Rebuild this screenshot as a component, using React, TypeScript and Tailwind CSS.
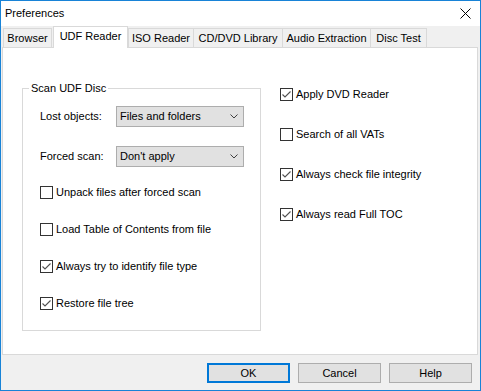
const FONT = "font-['Liberation_Sans',Arial,sans-serif]";

const TABS = [
  { label: 'Browser', w: 'w-[49px]' },
  { label: 'UDF Reader', w: 'w-[75px]', active: true },
  { label: 'ISO Reader', w: 'w-[66px]' },
  { label: 'CD/DVD Library', w: 'w-[90px]' },
  { label: 'Audio Extraction', w: 'w-[89px]' },
  { label: 'Disc Test', w: 'w-[57px]' },
];

function Check({ checked, label }: { checked?: boolean; label: string }) {
  return (
    <div className="flex items-center h-[16px] gap-[3px]">
      <div className="w-[13px] h-[13px] border border-[#333333] bg-white shrink-0 flex items-center justify-center">
        {checked && (
          <svg width="11" height="11" viewBox="0 0 11 11">
            <polyline points="1.5,5.5 4,8 9.5,2.5" fill="none" stroke="#505050" strokeWidth="1.1" />
          </svg>
        )}
      </div>
      <span className="whitespace-nowrap">{label}</span>
    </div>
  );
}

function Select({ value }: { value: string }) {
  return (
    <div className="w-[128px] h-[21px] border border-[#adadad] bg-[#e1e1e1] flex items-center justify-between pl-[3px] pr-[5px]">
      <span className="whitespace-nowrap">{value}</span>
      <svg width="8" height="5" viewBox="0 0 8 5">
        <polyline points="0.5,0.5 4,4 7.5,0.5" fill="none" stroke="#404040" strokeWidth="1" />
      </svg>
    </div>
  );
}

export default function App() {
  return (
    <div className={`w-[481px] h-[391px] border border-[#1883d7] bg-[#f0f0f0] flex flex-col text-[11px] leading-none text-black ${FONT}`}>
      {/* title bar */}
      <div className="h-[25px] bg-white flex items-center justify-between pl-[4px] pr-[9px] shrink-0">
        <span>Preferences</span>
        <svg width="11" height="11" viewBox="0 0 11 11">
          <path d="M0.5 0.5 L10.5 10.5 M10.5 0.5 L0.5 10.5" stroke="#000" strokeWidth="1" />
        </svg>
      </div>

      {/* tabs */}
      <div className="h-[21px] flex items-end pl-[2px] shrink-0">
        {TABS.map((t, i) =>
          t.active ? (
            <div
              key={i}
              className={`${t.w} h-[22px] -mb-px relative z-10 bg-white border border-b-0 border-[#d9d9d9] flex justify-center pt-[4px] ml-[1px]`}
            >
              {t.label}
            </div>
          ) : (
            <div
              key={i}
              className={`${t.w} h-[19px] bg-[#f0f0f0] border border-b-0 border-[#d9d9d9] flex items-center justify-center ${i > 2 ? '-ml-px' : ''}`}
            >
              {t.label}
            </div>
          )
        )}
      </div>

      {/* panel */}
      <div className="h-[308px] ml-[1px] mr-[2px] border border-[#d9d9d9] bg-white flex items-start pl-[19px] pt-[38px] shrink-0">
        <div className="relative mt-[2px] w-[239px] h-[243px] border border-[#d9d9d9] pl-[17px] pt-[17px] flex flex-col">
          <span className="absolute left-[6px] -top-[6px] bg-white px-[2px]">Scan UDF Disc</span>
          <div className="flex items-center h-[21px]">
            <span className="w-[76px]">Lost objects:</span>
            <Select value="Files and folders" />
          </div>
          <div className="flex items-center h-[21px] mt-[19px]">
            <span className="w-[76px]">Forced scan:</span>
            <Select value="Don't apply" />
          </div>
          <div className="mt-[17px] flex flex-col gap-[21px]">
            <Check label="Unpack files after forced scan" />
            <Check label="Load Table of Contents from file" />
            <Check checked label="Always try to identify file type" />
            <Check checked label="Restore file tree" />
          </div>
        </div>

        <div className="ml-[19px] flex flex-col gap-[24px]">
          <Check checked label="Apply DVD Reader" />
          <Check label="Search of all VATs" />
          <Check checked label="Always check file integrity" />
          <Check checked label="Always read Full TOC" />
        </div>
      </div>

      {/* buttons */}
      <div className="flex-1 flex justify-end items-start gap-[8px] pt-[8px] pr-[8px]">
        <button className="w-[83px] h-[20px] bg-[#e1e1e1] border-2 border-[#0078d7] flex items-center justify-center">OK</button>
        <button className="w-[83px] h-[20px] bg-[#e1e1e1] border border-[#adadad] flex items-center justify-center">Cancel</button>
        <button className="w-[83px] h-[20px] bg-[#e1e1e1] border border-[#adadad] flex items-center justify-center">Help</button>
      </div>
    </div>
  );
}
